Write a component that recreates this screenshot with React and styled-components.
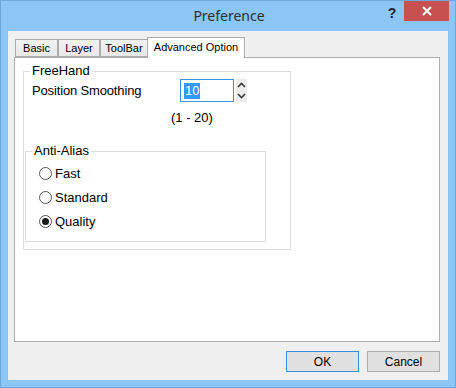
import React, { useState } from "react";
import styled, { createGlobalStyle } from "styled-components";

const GlobalStyle = createGlobalStyle`
    html, body {
        margin: 0;
        padding: 0;
        background: #ffffff;
    }
    * {
        box-sizing: border-box;
    }
`;

const TABS = [
    { label: "Basic", width: 43 },
    { label: "Layer", width: 42 },
    { label: "ToolBar", width: 48 },
    { label: "Advanced Option", width: 98 },
];

const QUALITIES = ["Fast", "Standard", "Quality"];

const App = () => {
    const [tab, setTab] = useState("Advanced Option");
    const [quality, setQuality] = useState("Quality");
    const [smoothing, setSmoothing] = useState(10);

    return (
        <>
            <GlobalStyle />
            <Window>
                <TitleBar>
                    <Title>Preference</Title>
                    <HelpButton>?</HelpButton>
                    <CloseButton>
                        <svg width="10" height="10" viewBox="0 0 10 10">
                            <path d="M1 1 L9 9 M9 1 L1 9" stroke="#ffffff" strokeWidth="2" fill="none" />
                        </svg>
                    </CloseButton>
                </TitleBar>

                <Client>
                    <TabStrip>
                        {TABS.map((t) => (
                            <Tab
                                key={t.label}
                                $width={t.width}
                                $active={tab === t.label}
                                onClick={() => setTab(t.label)}
                            >
                                {t.label}
                            </Tab>
                        ))}
                    </TabStrip>

                    <Panel>
                        <Group $width={268} $padBottom={7}>
                            <Legend>FreeHand</Legend>
                            <FieldRow>
                                <FieldLabel>Position Smoothing</FieldLabel>
                                <NumberBox>
                                    <Selected>{smoothing}</Selected>
                                </NumberBox>
                                <Spinner>
                                    <SpinBtn onClick={() => setSmoothing((v) => Math.min(20, v + 1))}>
                                        <svg width="9" height="6" viewBox="0 0 9 6">
                                            <path d="M1 5 L4.5 1.5 L8 5" stroke="#3a3a3a" strokeWidth="1.6" fill="none" />
                                        </svg>
                                    </SpinBtn>
                                    <SpinBtn onClick={() => setSmoothing((v) => Math.max(1, v - 1))}>
                                        <svg width="9" height="6" viewBox="0 0 9 6">
                                            <path d="M1 1 L4.5 4.5 L8 1" stroke="#3a3a3a" strokeWidth="1.6" fill="none" />
                                        </svg>
                                    </SpinBtn>
                                </Spinner>
                            </FieldRow>
                            <RangeHint>(1 - 20)</RangeHint>

                            <Group $width={241} $inner $padBottom={8}>
                                <Legend>Anti-Alias</Legend>
                                <RadioList>
                                    {QUALITIES.map((q) => (
                                        <RadioRow key={q} onClick={() => setQuality(q)}>
                                            <RadioCircle $checked={quality === q} />
                                            <span>{q}</span>
                                        </RadioRow>
                                    ))}
                                </RadioList>
                            </Group>
                        </Group>
                    </Panel>

                    <ButtonRow>
                        <DialogButton $default>OK</DialogButton>
                        <DialogButton>Cancel</DialogButton>
                    </ButtonRow>
                </Client>
            </Window>
        </>
    );
};

const Window = styled.div`
    width: 456px;
    height: 388px;
    background: #8bc6f7;
    border: 1px solid #6ea9de;
    display: flex;
    flex-direction: column;
`;

const TitleBar = styled.div`
    height: 30px;
    position: relative;
    display: flex;
    align-items: flex-start;
    justify-content: center;
`;

const Title = styled.div`
    font-family: "Noto Sans", "Open Sans", sans-serif;
    font-size: 14px;
    color: #2e2e2e;
    line-height: 18px;
    margin-top: 6px;
    margin-left: 2px;
`;

const HelpButton = styled.div`
    position: absolute;
    left: 382px;
    top: 4px;
    width: 18px;
    font-family: "Liberation Sans", Arial, sans-serif;
    font-weight: bold;
    font-size: 14px;
    color: #1f1f1f;
    text-align: center;
`;

const CloseButton = styled.div`
    position: absolute;
    left: 403px;
    top: 0;
    width: 45px;
    height: 20px;
    background: #c75050;
    display: flex;
    align-items: center;
    justify-content: center;
`;

const Client = styled.div`
    flex: 1;
    margin: 0 7px 7px 7px;
    background: #f0f0f0;
    padding: 7px 8px 0 6px;
    display: flex;
    flex-direction: column;
`;

const TabStrip = styled.div`
    height: 20px;
    display: flex;
    align-items: flex-end;
    padding-left: 1px;
    position: relative;
    z-index: 1;
    margin-bottom: -1px;
`;

const Tab = styled.div`
    width: ${(p) => p.$width}px;
    height: ${(p) => (p.$active ? 21 : 18)}px;
    margin-left: ${(p) => (p.$active ? -1 : 0)}px;
    margin-bottom: ${(p) => (p.$active ? 0 : 1)}px;
    background: ${(p) => (p.$active ? "#ffffff" : "linear-gradient(#f3f3f3, #e8e8e8)")};
    border: 1px solid #acacac;
    border-bottom: ${(p) => (p.$active ? "none" : "1px solid #acacac")};
    font-family: "Liberation Sans", Arial, sans-serif;
    font-size: 11px;
    color: #000;
    display: flex;
    align-items: center;
    justify-content: center;
    padding-bottom: ${(p) => (p.$active ? 3 : 0)}px;
    cursor: default;

    & + & {
        border-left: ${(p) => (p.$active ? "1px solid #acacac" : "none")};
    }
`;

const Panel = styled.div`
    height: 285px;
    background: #ffffff;
    border: 1px solid #acacac;
    padding: 5px 0 0 8px;
    font-family: "Liberation Sans", Arial, sans-serif;
    font-size: 13px;
    color: #000;
`;

const Group = styled.fieldset`
    width: ${(p) => p.$width}px;
    margin: ${(p) => (p.$inner ? "17px 0 0 1px" : "0")};
    padding: 0 0 ${(p) => p.$padBottom}px 0;
    border: 1px solid #dcdcdc;
    min-width: 0;
`;

const Legend = styled.legend`
    margin-left: 6px;
    padding: 0 2px;
    font-size: 13px;
    line-height: 16px;
`;

const FieldRow = styled.div`
    height: 23px;
    display: flex;
    align-items: center;
    padding-left: 8px;
`;

const FieldLabel = styled.div`
    width: 148px;
    letter-spacing: -0.15px;
`;

const NumberBox = styled.div`
    width: 54px;
    height: 23px;
    border: 1px solid #3c8fe0;
    background: #fff;
    display: flex;
    align-items: center;
    padding-left: 3px;
`;

const Selected = styled.span`
    background: #3399ff;
    color: #fff;
    line-height: 16px;
    padding: 0 1px;
`;

const Spinner = styled.div`
    width: 11px;
    height: 23px;
    margin-left: 2px;
    display: flex;
    flex-direction: column;
    background: #ececec;
`;

const SpinBtn = styled.div`
    flex: 1;
    display: flex;
    align-items: center;
    justify-content: center;
`;

const RangeHint = styled.div`
    margin: 8px 0 0 147px;
    line-height: 16px;
`;

const RadioList = styled.div`
    padding: 2px 0 0 13px;
    display: flex;
    flex-direction: column;
`;

const RadioRow = styled.div`
    height: 24px;
    display: flex;
    align-items: center;
    gap: 3px;
    cursor: default;
`;

const RadioCircle = styled.div`
    width: 13px;
    height: 13px;
    border-radius: 50%;
    border: 1px solid #555;
    background: #fff;
    display: flex;
    align-items: center;
    justify-content: center;

    &::after {
        content: "";
        width: 7px;
        height: 7px;
        border-radius: 50%;
        background: ${(p) => (p.$checked ? "#1a1a1a" : "transparent")};
    }
`;

const ButtonRow = styled.div`
    display: flex;
    justify-content: flex-end;
    gap: 8px;
    margin-top: 9px;
`;

const DialogButton = styled.button`
    width: 73px;
    height: 21px;
    padding: 0;
    background: #e1e1e1;
    border: 1px solid ${(p) => (p.$default ? "#3c8fe0" : "#adadad")};
    font-family: "Liberation Sans", Arial, sans-serif;
    font-size: 12px;
    color: #000;
`;

export default App;
